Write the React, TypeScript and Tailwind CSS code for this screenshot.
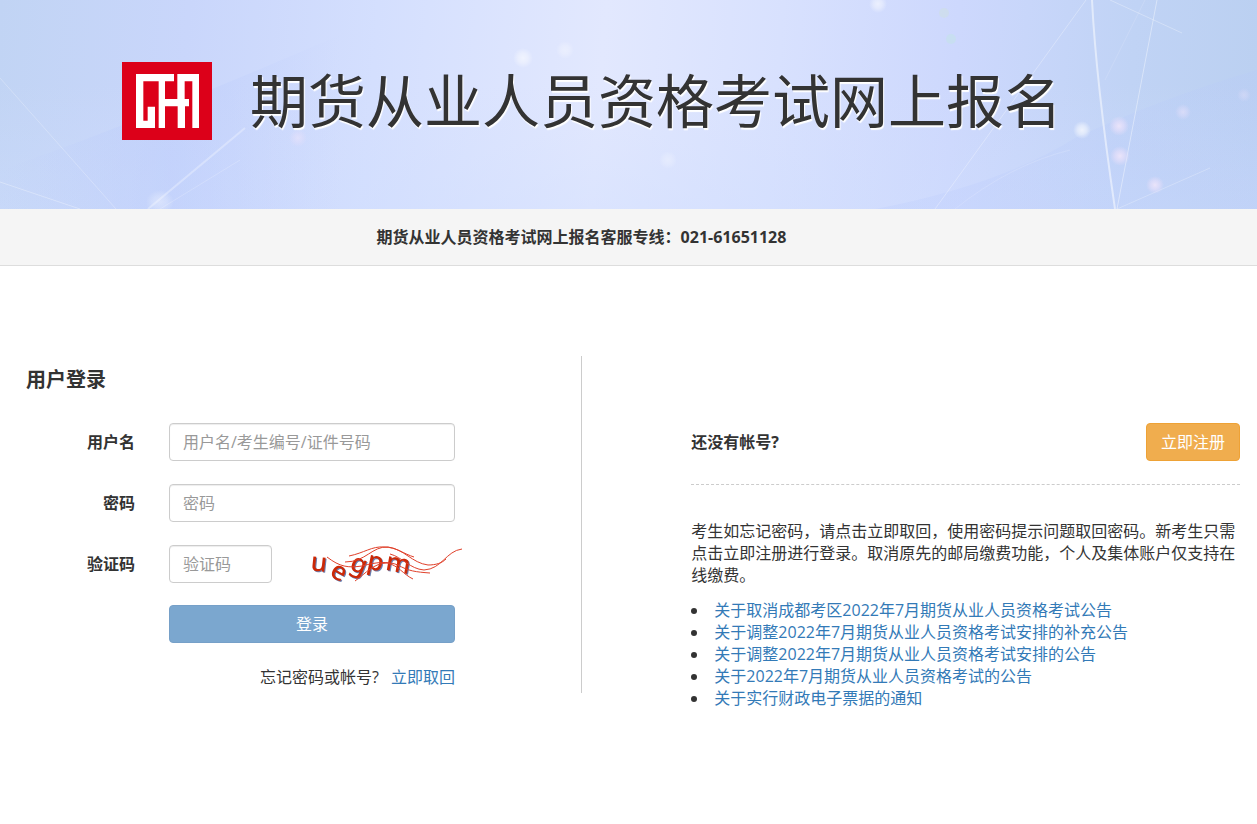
import { useState } from "react";

const notices = [
  "关于取消成都考区2022年7月期货从业人员资格考试公告",
  "关于调整2022年7月期货从业人员资格考试安排的补充公告",
  "关于调整2022年7月期货从业人员资格考试安排的公告",
  "关于2022年7月期货从业人员资格考试的公告",
  "关于实行财政电子票据的通知",
];

const inputClass =
  "h-[38px] rounded border border-[#ccc] bg-white px-[13px] text-base text-[#555] shadow-[inset_0_1px_1px_rgba(0,0,0,0.075)] outline-none placeholder:text-[#999] focus:border-[#66afe9]";

function BannerArt() {
  return (
    <svg
      className="absolute inset-0 h-full w-full"
      viewBox="0 0 1257 209"
      preserveAspectRatio="none"
      aria-hidden="true">
      <defs>
        <linearGradient id="sky" x1="0" y1="0" x2="1257" y2="90" gradientUnits="userSpaceOnUse">
          <stop offset="0" stopColor="#c1d4f4" />
          <stop offset="0.15" stopColor="#c9d6fb" />
          <stop offset="0.3" stopColor="#d4dffe" />
          <stop offset="0.48" stopColor="#e2e8fe" />
          <stop offset="0.62" stopColor="#d8e1fe" />
          <stop offset="0.76" stopColor="#cdd8fd" />
          <stop offset="0.9" stopColor="#c0d3f5" />
          <stop offset="1" stopColor="#bbd0f1" />
        </linearGradient>
        <linearGradient id="shade" x1="0" y1="0" x2="0" y2="1">
          <stop offset="0.4" stopColor="#d3dffe" stopOpacity="0" />
          <stop offset="1" stopColor="#d0defe" stopOpacity="0.4" />
        </linearGradient>
        <linearGradient id="wing" x1="0" y1="0" x2="0" y2="1">
          <stop offset="0" stopColor="#b6c8fa" stopOpacity="0.2" />
          <stop offset="1" stopColor="#b9cafc" stopOpacity="0.25" />
        </linearGradient>
        <linearGradient id="fold" x1="0" y1="0" x2="340" y2="0" gradientUnits="userSpaceOnUse">
          <stop offset="0" stopColor="#b9c9fc" stopOpacity="0" />
          <stop offset="0.5" stopColor="#b6c8fb" stopOpacity="0.35" />
          <stop offset="1" stopColor="#b9c9fc" stopOpacity="0" />
        </linearGradient>
        <radialGradient id="dot">
          <stop offset="0" stopColor="#fff" stopOpacity="0.7" />
          <stop offset="0.5" stopColor="#fff" stopOpacity="0.45" />
          <stop offset="1" stopColor="#fff" stopOpacity="0" />
        </radialGradient>
        <radialGradient id="pinkDot">
          <stop offset="0" stopColor="#efe6fa" stopOpacity="0.9" />
          <stop offset="0.5" stopColor="#e8e0fa" stopOpacity="0.6" />
          <stop offset="1" stopColor="#e6dcf8" stopOpacity="0" />
        </radialGradient>
      </defs>
      <rect width="1257" height="209" fill="url(#sky)" />
      <rect width="1257" height="209" fill="url(#shade)" />
      <path d="M0 170 Q120 130 340 35 V209 H0Z" fill="url(#fold)" />
      <path d="M875 209 Q1000 185 1075 138 Q1170 95 1257 70 V209Z" fill="url(#wing)" />
      <g stroke="#fff" fill="none">
        <path d="M0 78 L116 209" strokeOpacity="0.25" />
        <path d="M0 182 L80 209" strokeOpacity="0.3" />
        <path d="M148 209 L245 128" strokeOpacity="0.3" strokeWidth="2" />
        <path d="M160 209 L240 160" strokeOpacity="0.2" />
        <path d="M1086 0 L935 209" strokeOpacity="0.3" />
        <path d="M1092 0 Q1096 80 1115 209" strokeOpacity="0.5" strokeWidth="2" />
        <path d="M1157 0 L1117 209" strokeOpacity="0.4" />
        <path d="M1110 0 L1182 33" strokeOpacity="0.3" />
        <path d="M1145 0 L1105 80" strokeOpacity="0.15" />
        <path d="M1117 209 L1210 168" strokeOpacity="0.25" />
        <path d="M955 209 Q1010 165 1070 150" strokeOpacity="0.15" />
      </g>
      <ellipse cx="160" cy="202" rx="14" ry="12" fill="url(#dot)" opacity="0.5" />
      <circle cx="523" cy="58" r="10" fill="url(#dot)" opacity="0.8" />
      <circle cx="565" cy="50" r="9" fill="url(#dot)" opacity="0.5" />
      <circle cx="298" cy="138" r="9" fill="url(#pinkDot)" opacity="0.6" />
      <circle cx="668" cy="160" r="9" fill="url(#dot)" opacity="0.4" />
      <circle cx="878" cy="4" r="9" fill="url(#dot)" opacity="0.8" />
      <circle cx="944" cy="13" r="5" fill="#cfe0e4" opacity="0.6" />
      <circle cx="951" cy="39" r="5" fill="#c4e2ea" opacity="0.6" />
      <circle cx="1082" cy="130" r="9" fill="url(#dot)" />
      <circle cx="1119" cy="126" r="10" fill="url(#pinkDot)" />
      <circle cx="1120" cy="156" r="10" fill="url(#pinkDot)" />
      <circle cx="1155" cy="185" r="9" fill="url(#pinkDot)" />
      <circle cx="1183" cy="112" r="8" fill="url(#pinkDot)" opacity="0.6" />
      <circle cx="1244" cy="95" r="7" fill="url(#pinkDot)" opacity="0.4" />
    </svg>
  );
}

function Logo() {
  return (
    <svg className="h-[78px] w-[90px] flex-none" viewBox="0 0 270 234" role="img" aria-label="CFA">
      <rect width="270" height="234" fill="#dc0019" />
      <path
        fill="#fff"
        d="M42 36H156V58H129V111H166V36H231V198H211V58H188V111H201V133H189V198H167V133H129V198H110V58H64V176H77V134H99V198H42Z"
      />
    </svg>
  );
}

function Captcha() {
  return (
    <svg className="h-[38px] w-40 flex-none overflow-visible" viewBox="0 0 160 38">
      <g
        fill="#cc2806"
        className="font-['Noto_Sans',sans-serif] text-[26px] font-medium drop-shadow-[1px_1px_0_#6a7fb0]"
        textAnchor="middle">
        <text transform="translate(14 26) rotate(6)">u</text>
        <text transform="translate(31 34) rotate(28)">e</text>
        <text transform="translate(52 27) rotate(22)">g</text>
        <text transform="translate(70 25) rotate(12)">p</text>
        <text transform="translate(93 27) rotate(10)">m</text>
      </g>
      <g fill="none" stroke="#e0402a" strokeWidth="1">
        <path d="M45 11C60 8 68 1 80 2C92 2 100 9 110 12" />
        <path d="M41 17C62 17 68 1 84 2C100 4 108 18 124 20C132 20 138 18 142 14" />
        <path d="M23 12C36 22 44 23 58 21C72 17 84 16 94 20C104 26 112 27 126 28" />
        <path d="M51 36C62 28 70 18 83 18C94 20 100 30 109 34" />
        <path d="M86 9C98 12 106 24 120 25C138 24 142 6 158 4" />
      </g>
    </svg>
  );
}

function LoginForm() {
  const [name, setName] = useState("");
  const [password, setPassword] = useState("");
  const [code, setCode] = useState("");

  return (
    <form className="pr-[126px]" onSubmit={(e) => e.preventDefault()}>
      <div className="mb-[23px] flex items-center gap-[34px]">
        <label htmlFor="name" className="w-[109px] flex-none text-right font-bold">
          用户名
        </label>
        <input
          id="name"
          className={`${inputClass} min-w-0 flex-1`}
          placeholder="用户名/考生编号/证件号码"
          value={name}
          onChange={(e) => setName(e.target.value)}
        />
      </div>
      <div className="mb-[23px] flex items-center gap-[34px]">
        <label htmlFor="password" className="w-[109px] flex-none text-right font-bold">
          密码
        </label>
        <input
          id="password"
          type="password"
          className={`${inputClass} min-w-0 flex-1`}
          placeholder="密码"
          value={password}
          onChange={(e) => setPassword(e.target.value)}
        />
      </div>
      <div className="mb-[22px] flex items-center gap-[34px]">
        <label htmlFor="code" className="w-[109px] flex-none text-right font-bold">
          验证码
        </label>
        <div className="flex min-w-0 flex-1 gap-8">
          <input
            id="code"
            className={`${inputClass} w-[103px] flex-none`}
            placeholder="验证码"
            value={code}
            onChange={(e) => setCode(e.target.value)}
          />
          <Captcha />
        </div>
      </div>
      <div className="pl-[143px]">
        <button
          type="submit"
          className="h-[38px] w-full rounded border border-[#76a0c8] bg-[#7ba7cf] text-white">
          登录
        </button>
        <p className="mt-[23px] text-right">
          忘记密码或帐号?
          <a href="#find" className="ml-3 text-[#337ab7]">
            立即取回
          </a>
        </p>
      </div>
    </form>
  );
}

export default function App() {
  return (
    <div className="min-h-screen bg-white font-['Open_Sans','Noto_Sans_CJK_SC',sans-serif] text-base leading-[22px] text-[#333]">
      <header className="relative flex h-[209px] items-center overflow-hidden pb-[7px] pl-[122px]">
        <BannerArt />
        <div className="relative flex items-center gap-[38px]">
          <Logo />
          <h1 className="text-[58px] leading-[78px] whitespace-nowrap [text-shadow:1px_2px_1px_#fff]">
            期货从业人员资格考试网上报名
          </h1>
        </div>
      </header>

      <div className="border-b border-[#ddd] bg-[#f5f5f5] py-[17px] pr-[94px] text-center font-bold">
        期货从业人员资格考试网上报名客服专线：021-61651128
      </div>

      <main className="mt-[90px] flex items-start">
        <section className="h-[337px] w-[46.3%] flex-none border-r border-[#ccc] pl-[26px]">
          <h2 className="pt-[13px] pb-8 text-xl leading-[22px] font-bold">用户登录</h2>
          <LoginForm />
        </section>

        <section className="min-w-0 flex-1 pt-[67px] pr-[17px] pl-[8.7%]">
          <div className="flex items-center justify-between border-b border-dashed border-[#ccc] pb-[23px]">
            <strong>还没有帐号?</strong>
            <button
              type="button"
              className="h-[38px] rounded border border-[#eea236] bg-[#f0ad4e] px-[14px] text-white">
              立即注册
            </button>
          </div>
          <p className="mt-[35px]">
            考生如忘记密码，请点击立即取回，使用密码提示问题取回密码。新考生只需点击立即注册进行登录。取消原先的邮局缴费功能，个人及集体账户仅支持在线缴费。
          </p>
          <ul className="mt-[13px] list-disc pl-[18px]">
            {notices.map((title) => (
              <li key={title} className="pl-[5px]">
                <a href="#notice" className="text-[#337ab7]">
                  {title}
                </a>
              </li>
            ))}
          </ul>
        </section>
      </main>
    </div>
  );
}
